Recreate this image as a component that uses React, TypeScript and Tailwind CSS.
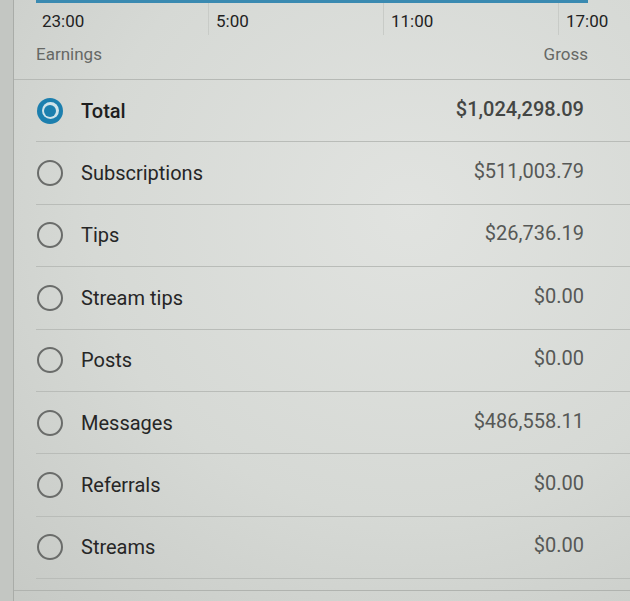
import React from "react";

const rows = [
  { name: "Total", amount: "$1,024,298.09", selected: true },
  { name: "Subscriptions", amount: "$511,003.79" },
  { name: "Tips", amount: "$26,736.19" },
  { name: "Stream tips", amount: "$0.00" },
  { name: "Posts", amount: "$0.00" },
  { name: "Messages", amount: "$486,558.11" },
  { name: "Referrals", amount: "$0.00" },
  { name: "Streams", amount: "$0.00" },
];

const times = ["23:00", "5:00", "11:00", "17:00"];

const Radio: React.FC<{ on?: boolean }> = ({ on }) =>
  on ? (
    <div className="w-[26px] h-[26px] rounded-full bg-[#1c7fae] flex items-center justify-center">
      <div className="w-[17px] h-[17px] rounded-full bg-[#cfe3ea] flex items-center justify-center">
        <div className="w-[12px] h-[12px] rounded-full bg-[#1c7fae]" />
      </div>
    </div>
  ) : (
    <div className="w-[26px] h-[26px] rounded-full border-[2.5px] border-[#6a6c6a]" />
  );

export default function App() {
  return (
    <div
      className="w-[630px] h-[601px] overflow-hidden flex bg-[radial-gradient(ellipse_at_65%_35%,#e1e3e0_0%,#d6d9d5_55%,#c6c9c5_100%)]"
      style={{ fontFamily: "Roboto, 'Noto Sans', sans-serif" }}
    >
      {/* left gutter */}
      <div className="w-[13px] shrink-0 bg-[#c3c6c2]" />

      <div className="flex-1 flex flex-col border-l border-[#a9aca8]">
        {/* chart axis */}
        <div className="relative h-[35px] flex pl-[20px]">
          <div className="absolute left-[22px] top-0 w-[552px] h-[3px] bg-[#3a8ab1]" />
          {times.map((t, i) => (
            <div
              key={t}
              className={
                i === 0
                  ? "w-[174px] pl-[8px] pt-[9px] text-[17px] text-[#222]"
                  : i === 3
                  ? "flex-1 border-l border-[#c8cbc7] pl-[7px] pt-[9px] text-[17px] text-[#222]"
                  : "w-[175px] border-l border-[#c8cbc7] pl-[7px] pt-[9px] text-[17px] text-[#222]"
              }
            >
              {t}
            </div>
          ))}
        </div>

        {/* header */}
        <div className="h-[45px] flex items-center justify-between pl-[22px] pr-[42px] border-b border-[#b6b9b5] text-[17px] text-[#666865]">
          <span className="-mt-[5px]">Earnings</span>
          <span className="-mt-[5px]">Gross</span>
        </div>

        {/* rows */}
        <div className="pl-[22px]">
          {rows.map((r) => (
            <div
              key={r.name}
              className="h-[62.4px] flex items-center border-b border-[#b9bcb8] pr-[46px]"
            >
              <div className="ml-[1px] mr-[18px]">
                <Radio on={r.selected} />
              </div>
              <span
                className={
                  r.selected
                    ? "flex-1 text-[20px] font-medium text-[#1e1e1e]"
                    : "flex-1 text-[20px] text-[#262626]"
                }
              >
                {r.name}
              </span>
              <span
                className={
                  r.selected
                    ? "text-[20px] font-medium text-[#444644] -mt-[4px]"
                    : "text-[20px] text-[#565856] -mt-[4px]"
                }
              >
                {r.amount}
              </span>
            </div>
          ))}
        </div>

        <div className="mt-[11px] border-t border-[#b0b3af]" />
      </div>
    </div>
  );
}
